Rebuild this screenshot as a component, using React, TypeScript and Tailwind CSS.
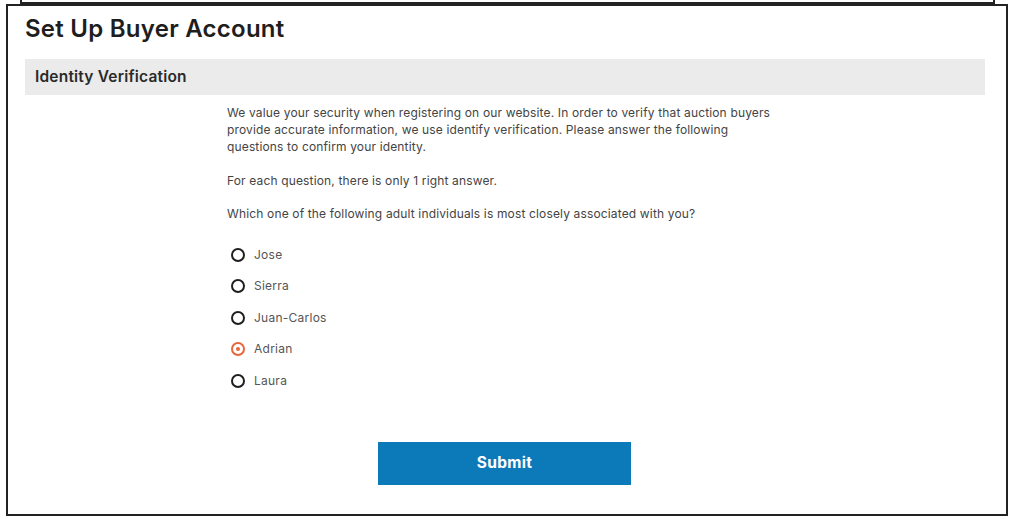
import React from "react";

const options = ["Jose", "Sierra", "Juan-Carlos", "Adrian", "Laura"];

function Radio({ checked }: { checked: boolean }) {
  return checked ? (
    <span className="flex h-[14px] w-[14px] items-center justify-center rounded-full border-2 border-[#e8673a]">
      <span className="h-[4px] w-[4px] rounded-full bg-[#e8673a]" />
    </span>
  ) : (
    <span className="h-[14px] w-[14px] rounded-full border-2 border-[#1f1f1f]" />
  );
}

export default function App() {
  return (
    <div
      className="w-[1013px] h-[519px] overflow-hidden bg-white"
      style={{ fontFamily: "Inter, 'Noto Sans', sans-serif" }}
    >
      <div className="ml-[20px] h-[4px] w-[975px] border-x-2 border-b-2 border-[#222]" />
      <div className="ml-[6px] h-[512px] w-[1002px] border-2 border-[#222] flex flex-col">
        <h1 className="ml-[17px] mt-[8px] text-[24px] leading-[30px] font-semibold text-[#1e1e1e] tracking-[0.25px]">
          Set Up Buyer Account
        </h1>
        <div className="ml-[17px] mt-[15px] flex h-[36px] w-[960px] items-center bg-[#ebebeb] pl-[10px]">
          <span className="text-[15.5px] font-semibold tracking-[0.2px] text-[#2a2a2a]">Identity Verification</span>
        </div>
        <div className="ml-[219px] mt-[9px] flex flex-col text-[12px] leading-[17px] tracking-[0.15px] text-[#444]">
          <p className="whitespace-nowrap">
            We value your security when registering on our website. In order to verify that auction buyers
            <br />
            provide accurate information, we use identify verification. Please answer the following
            <br />
            questions to confirm your identity.
          </p>
          <p className="mt-[17px]">For each question, there is only 1 right answer.</p>
          <p className="mt-[16px]">Which one of the following adult individuals is most closely associated with you?</p>
          <div className="mt-[17px] flex flex-col">
            {options.map((o) => (
              <label key={o} className="flex h-[31.5px] items-center gap-[9px] pl-[4px]">
                <Radio checked={o === "Adrian"} />
                <span className="-mt-[1px] text-[12px] tracking-[0.25px] text-[#555]">{o}</span>
              </label>
            ))}
          </div>
        </div>
        <div className="ml-[370px] mt-[45px]">
          <button className="flex h-[43px] w-[253px] items-center justify-center bg-[#0c79b9] text-[15.5px] font-bold tracking-[0.3px] text-white">
            Submit
          </button>
        </div>
      </div>
    </div>
  );
}
